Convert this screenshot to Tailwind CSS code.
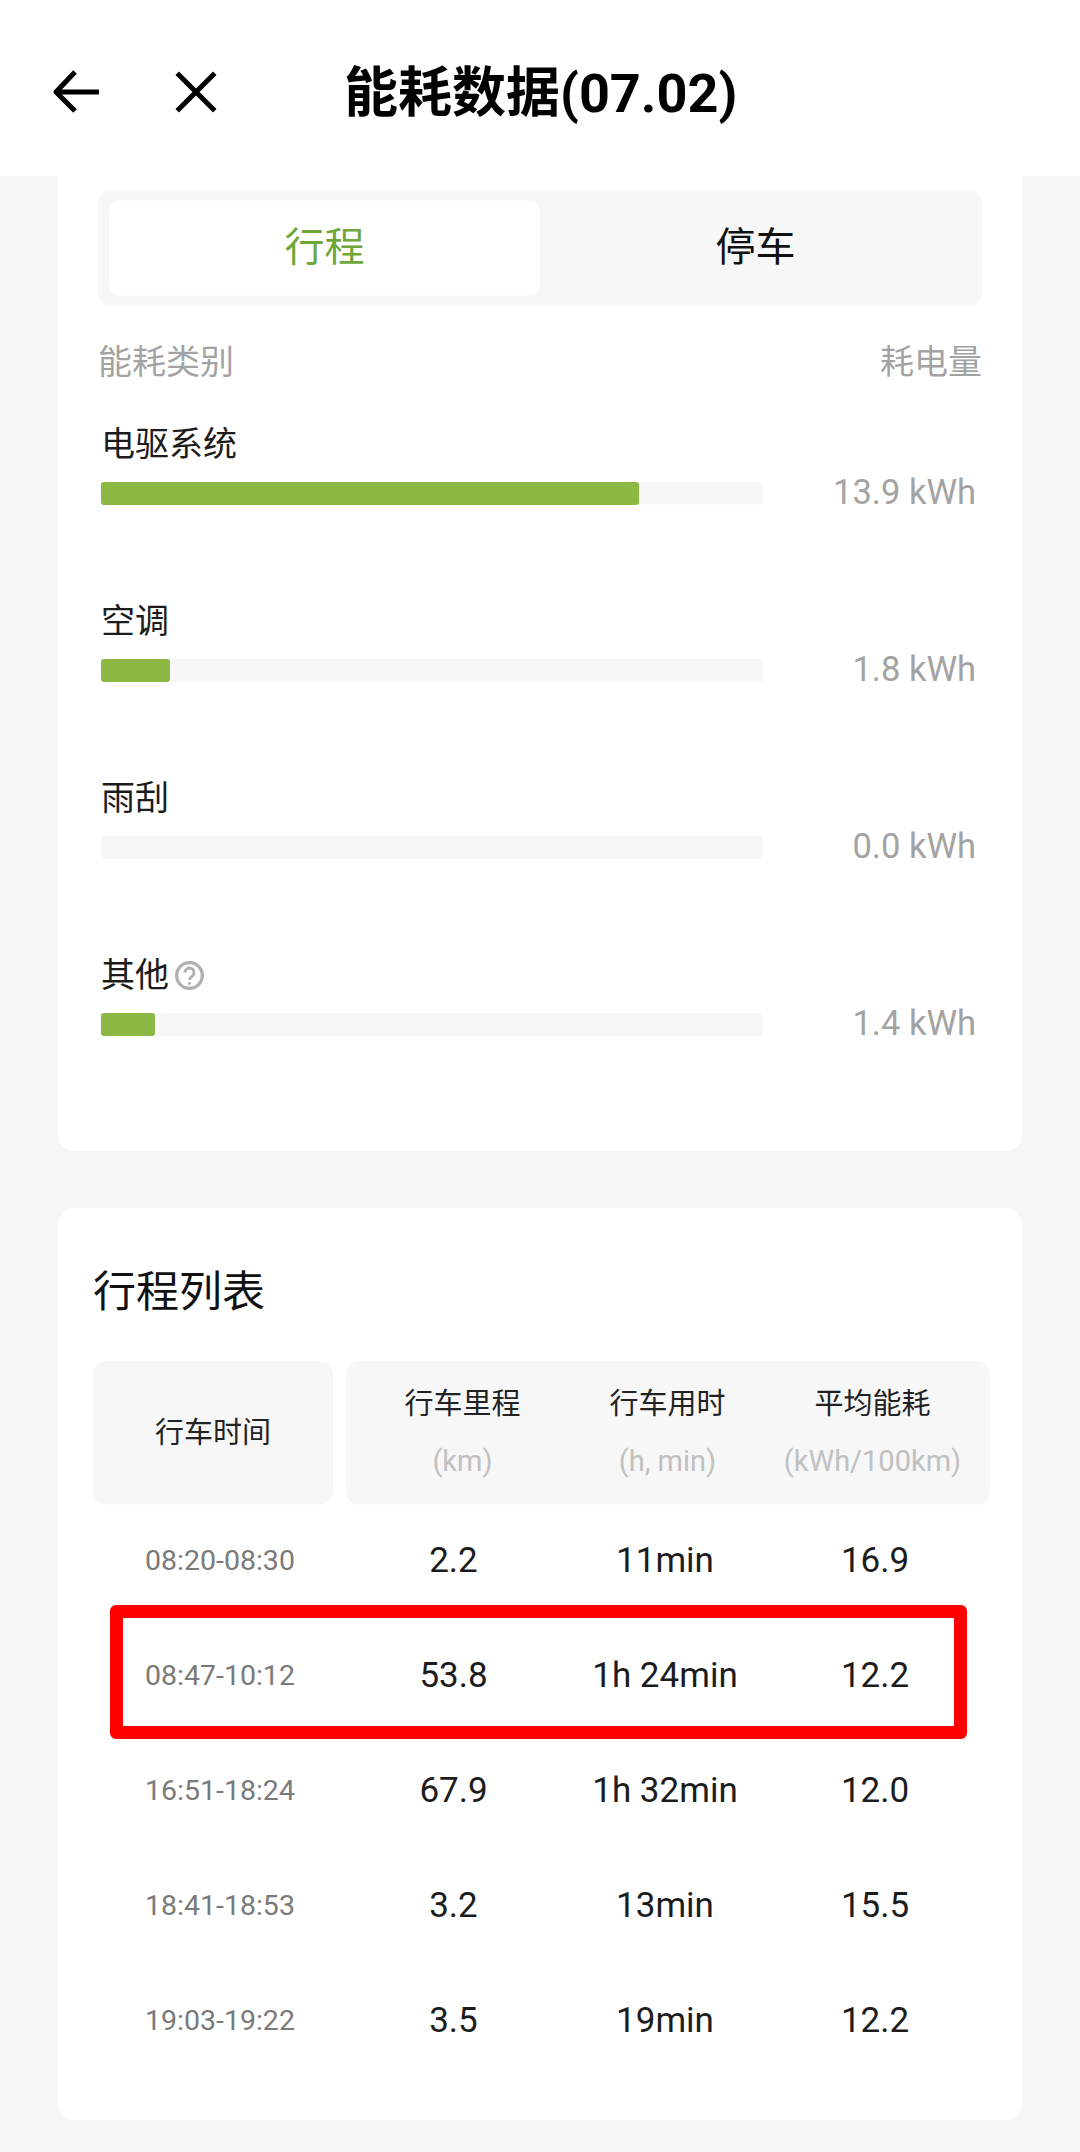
<!DOCTYPE html>
<html lang="zh">
<head>
<meta charset="utf-8">
<script src="https://cdn.jsdelivr.net/npm/@tailwindcss/browser@4"></script>
<title>能耗数据</title>
</head>
<body class="m-0">
<div class="relative w-[1080px] h-[2152px] overflow-hidden bg-[#f6f6f6] font-['Roboto','Noto_Sans_CJK_SC',sans-serif] text-[#1c1c1c]">
  <header class="h-[176px] bg-white flex items-center pt-[8px] pl-[50px]">
    <svg class="w-[54px] h-[54px] shrink-0" viewBox="0 0 54 54" fill="none" stroke="#000" stroke-width="5" stroke-linecap="butt" stroke-linejoin="round"><path d="M25 7 L6 27 L25 46 M6 27 H49"/></svg>
    <svg class="w-[54px] h-[54px] shrink-0 ml-[65px]" viewBox="0 0 54 54" fill="none" stroke="#000" stroke-width="5" stroke-linecap="square"><path d="M10 10 L44 44 M44 10 L10 44"/></svg>
    <h1 class="ml-[121px] mt-[4px] text-[54px] leading-none font-bold text-black whitespace-nowrap">能耗数据(07.02)</h1>
  </header>

  <section class="mx-[58px] h-[975px] bg-white rounded-b-[16px] pt-[14px] px-[40px]">
    <div class="h-[116px] bg-[#f7f7f7] rounded-[14px] p-[11px] flex">
      <div class="w-[431px] bg-white rounded-[10px] flex items-center justify-center text-[40px] text-[#6fa63a]">行程</div>
      <div class="flex-1 flex items-center justify-center text-[40px] text-[#111]">停车</div>
    </div>
    <div class="mt-[32px] h-[48px] flex justify-between items-center text-[34px] text-[#a3a3a3]"><span>能耗类别</span><span>耗电量</span></div>
    <div class="mt-[34px] pl-[3px] pr-[6px]">
      <div class="h-[177px]">
        <div class="h-[48px] flex items-center text-[34px]">电驱系统</div>
        <div class="mt-[14px] flex items-start">
          <div class="w-[662px] h-[23px] bg-[#f7f7f7] rounded-[3px]"><div class="w-[538px] h-full bg-[#8bb944] rounded-[3px]"></div></div>
          <div class="flex-1 text-right text-[34.5px] leading-[21px] text-[#a3a3a3]">13.9 kWh</div>
        </div>
      </div>
      <div class="h-[177px]">
        <div class="h-[48px] flex items-center text-[34px]">空调</div>
        <div class="mt-[14px] flex items-start">
          <div class="w-[662px] h-[23px] bg-[#f7f7f7] rounded-[3px]"><div class="w-[69px] h-full bg-[#8bb944] rounded-[3px]"></div></div>
          <div class="flex-1 text-right text-[34.5px] leading-[21px] text-[#a3a3a3]">1.8 kWh</div>
        </div>
      </div>
      <div class="h-[177px]">
        <div class="h-[48px] flex items-center text-[34px]">雨刮</div>
        <div class="mt-[14px] flex items-start">
          <div class="w-[662px] h-[23px] bg-[#f7f7f7] rounded-[3px]"></div>
          <div class="flex-1 text-right text-[34.5px] leading-[21px] text-[#a3a3a3]">0.0 kWh</div>
        </div>
      </div>
      <div class="h-[177px]">
        <div class="h-[48px] flex items-center text-[34px]">其他
          <svg class="w-[29px] h-[29px] ml-[6px]" viewBox="0 0 28 28" fill="none" stroke="#b0b0b0" stroke-width="3.2"><circle cx="14" cy="14" r="12.4"/><path stroke-width="2.8" d="M9.6 11.2a4.4 4.4 0 1 1 6.9 3.6c-1.7 1.1-2.5 1.9-2.5 3.6"/><circle cx="14" cy="21.6" r="1.5" fill="#b0b0b0" stroke="none"/></svg>
        </div>
        <div class="mt-[14px] flex items-start">
          <div class="w-[662px] h-[23px] bg-[#f7f7f7] rounded-[3px]"><div class="w-[54px] h-full bg-[#8bb944] rounded-[3px]"></div></div>
          <div class="flex-1 text-right text-[34.5px] leading-[21px] text-[#a3a3a3]">1.4 kWh</div>
        </div>
      </div>
    </div>
  </section>

  <section class="relative mx-[58px] mt-[57px] h-[912px] bg-white rounded-[16px] pl-[35px]">
    <h2 class="pt-[54px] h-[153px] text-[43px] leading-[60px] font-normal text-[#111]">行程列表</h2>
    <div class="flex gap-[13px] h-[144px]">
      <div class="w-[240px] bg-[#f7f7f7] rounded-[14px] flex items-center justify-center pt-[1px] text-[29px] text-[#222]">行车时间</div>
      <div class="w-[644px] bg-[#f7f7f7] rounded-[14px] pl-[14px] grid grid-cols-[205px_205px_205px] text-center">
        <div class="pt-[23px]"><div class="text-[29px] leading-[40px] text-[#222]">行车里程</div><div class="mt-[19px] text-[29px] leading-[36px] text-[#c0c0c0]">(km)</div></div>
        <div class="pt-[23px]"><div class="text-[29px] leading-[40px] text-[#222]">行车用时</div><div class="mt-[19px] text-[29px] leading-[36px] text-[#c0c0c0]">(h, min)</div></div>
        <div class="pt-[23px]"><div class="text-[29px] leading-[40px] text-[#222]">平均能耗</div><div class="mt-[19px] text-[29px] leading-[36px] text-[#c0c0c0] whitespace-nowrap">(kWh/100km)</div></div>
      </div>
    </div>
    <div class="-mt-[1px]">
      <div class="grid grid-cols-[254px_213px_210px_210px] h-[115px] items-center text-center text-[35px]"><div class="text-[28.5px] text-[#7a7a7a]">08:20-08:30</div><div>2.2</div><div>11min</div><div>16.9</div></div>
      <div class="grid grid-cols-[254px_213px_210px_210px] h-[115px] items-center text-center text-[35px]"><div class="text-[28.5px] text-[#7a7a7a]">08:47-10:12</div><div>53.8</div><div>1h 24min</div><div>12.2</div></div>
      <div class="grid grid-cols-[254px_213px_210px_210px] h-[115px] items-center text-center text-[35px]"><div class="text-[28.5px] text-[#7a7a7a]">16:51-18:24</div><div>67.9</div><div>1h 32min</div><div>12.0</div></div>
      <div class="grid grid-cols-[254px_213px_210px_210px] h-[115px] items-center text-center text-[35px]"><div class="text-[28.5px] text-[#7a7a7a]">18:41-18:53</div><div>3.2</div><div>13min</div><div>15.5</div></div>
      <div class="grid grid-cols-[254px_213px_210px_210px] h-[115px] items-center text-center text-[35px]"><div class="text-[28.5px] text-[#7a7a7a]">19:03-19:22</div><div>3.5</div><div>19min</div><div>12.2</div></div>
    </div>
    <div class="absolute left-[52px] top-[397px] w-[857px] h-[134px] border-[13px] border-[#ff0000] rounded-[6px]"></div>
  </section>
</div>
</body>
</html>
